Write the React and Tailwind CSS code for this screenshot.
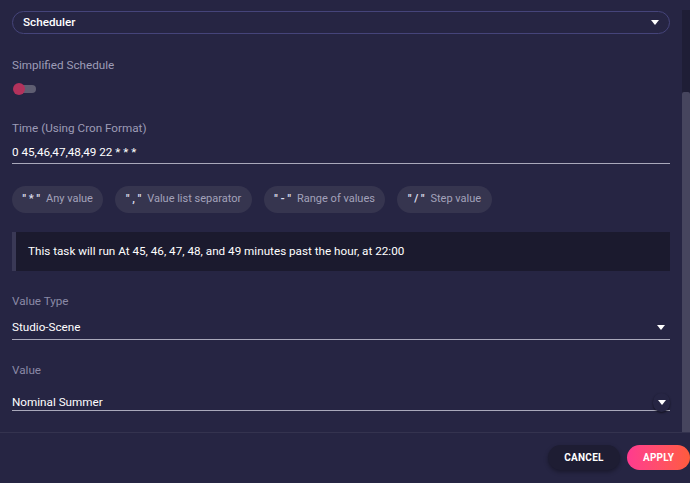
import React from 'react';

function Caret() {
  return (
    <svg width="8" height="5" viewBox="0 0 8 5" className="shrink-0">
      <path d="M0 0 L8 0 L4 5 Z" fill="#ffffff" />
    </svg>
  );
}

function Chip({ sym, label }) {
  return (
    <div className="flex h-[27px] items-center gap-[6px] rounded-full bg-[#36354f] px-[10.5px] text-[11px] text-[#a3a2ba]">
      <span className="font-bold text-[#dcdcea]">{sym}</span>
      <span>{label}</span>
    </div>
  );
}

function UnderlineSelect({ value, ring, tight }) {
  return (
    <div className="relative flex items-center">
      <div className={tight ? 'flex-1 border-b border-[#a9a9bb] text-[11.7px] leading-[16px] text-white' : 'flex-1 border-b border-[#a9a9bb] pb-[4px] text-[11.7px] leading-[16px] text-white'}>
        {value}
      </div>
      {ring ? (
        <div className="absolute right-0 top-[-1px] flex h-[19px] w-[17px] items-center justify-center rounded-full bg-[#262543] shadow-[0_1px_2px_rgba(0,0,0,0.55)]">
          <Caret />
        </div>
      ) : (
        <div className="absolute right-[5px] top-[6px]">
          <Caret />
        </div>
      )}
    </div>
  );
}

export default function App() {
  return (
    <div className="flex h-[483px] w-[690px] flex-col overflow-hidden bg-[#262543] font-['Roboto',sans-serif]">
      <div className="flex h-[433px] border-b border-[#34334f]">
        <div className="flex-1 px-3 pt-[11px]">
          <div className="flex h-[23px] items-center justify-between rounded-full border border-[#45447a] pl-[10px] pr-[10px]">
            <span className="text-[11.7px] font-medium text-white">Scheduler</span>
            <Caret />
          </div>

          <div className="mt-[23px] text-[11.7px] leading-[16px] text-[#9d9cb6]">Simplified Schedule</div>
          <div className="relative mt-[10px] h-[12px] w-[26px]">
            <div className="absolute left-[4px] top-[2px] h-[8px] w-[20px] rounded-full bg-[#5f5e72]" />
            <div className="absolute left-[1px] top-0 h-[12px] w-[12px] rounded-full bg-[#b3325c]" />
          </div>

          <div className="mt-[25px] text-[11.7px] leading-[16px] text-[#9d9cb6]">Time (Using Cron Format)</div>
          <div className="mt-[8px] border-b border-[#a9a9bb] pb-[3px] text-[11.7px] leading-[16px] text-white">
            0 45,46,47,48,49 22 * * *
          </div>

          <div className="mt-[22px] flex gap-3">
            <Chip sym={'" * "'} label="Any value" />
            <Chip sym={'" , "'} label="Value list separator" />
            <Chip sym={'" - "'} label="Range of values" />
            <Chip sym={'" / "'} label="Step value" />
          </div>

          <div className="mt-[19px] flex h-[39px] items-center border-l-4 border-[#3a3956] bg-[#1b1a2e] pl-3 text-[11.7px] text-white">
            This task will run At 45, 46, 47, 48, and 49 minutes past the hour, at 22:00
          </div>

          <div className="mt-[22px] text-[11.7px] leading-[16px] text-[#8a89a6]">Value Type</div>
          <div className="mt-[10px]">
            <UnderlineSelect value="Studio-Scene" />
          </div>

          <div className="mt-[22px] text-[11.7px] leading-[16px] text-[#8a89a6]">Value</div>
          <div className="mt-[16px]">
            <UnderlineSelect value="Nominal Summer" ring tight />
          </div>
        </div>
        <div className="flex w-[8px] flex-col pt-[10px]">
          <div className="flex flex-1 flex-col bg-[#1f1e36]">
            <div className="mt-[82px] flex-1 rounded-t-[2px] bg-[#46455e]" />
          </div>
        </div>
      </div>

      <div className="flex flex-1 items-center justify-end gap-[7px] pb-[2px]">
        <button className="h-[25px] w-[72px] rounded-full bg-[#1e1d33] text-[10px] font-bold tracking-wide text-white shadow-[0_2px_4px_rgba(0,0,0,0.35)]">
          CANCEL
        </button>
        <button className="h-[25px] w-[63px] rounded-full bg-gradient-to-r from-[#ff3a8f] to-[#ff5b3a] text-[10px] font-bold tracking-wide text-white">
          APPLY
        </button>
      </div>
    </div>
  );
}
